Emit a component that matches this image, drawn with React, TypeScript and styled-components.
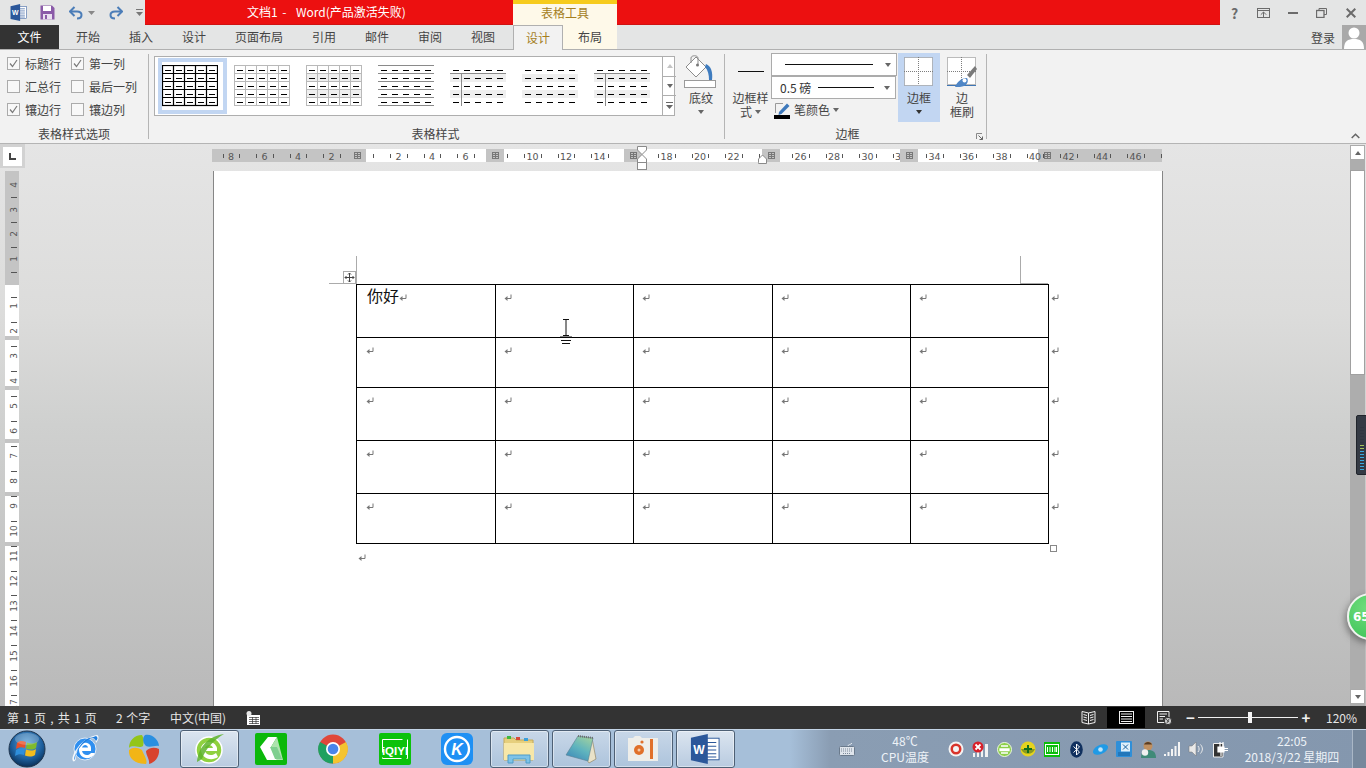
import React from 'react';
import styled, { createGlobalStyle } from 'styled-components';

const GlobalStyle = createGlobalStyle`
  html, body {
    margin: 0;
    padding: 0;
    background: #333;
  }
  * {
    box-sizing: border-box;
  }
`;

const Frame = styled.div`
  position: relative;
  display: flex;
  flex-direction: column;
  width: 1366px;
  height: 768px;
  overflow: hidden;
  font-family: "Noto Sans CJK SC", "Noto Sans", sans-serif;
  font-size: 12px;
  color: #444;
`;

/* ---------- title bar ---------- */
const TitleBar = styled.div`
  display: flex;
  height: 25px;
  flex: none;
  background: #e4e5e5;
`;
const Qat = styled.div`
  display: flex;
  align-items: center;
  width: 145px;
  flex: none;
  padding-left: 10px;
`;
const QatIcon = styled.svg<{ $gap?: number }>`
  display: block;
  flex: none;
  margin-left: ${({ $gap }) => $gap ?? 0}px;
`;
const RedBand = styled.div`
  display: flex;
  flex: 1;
  height: 25px;
  background: #ec1010;
  box-shadow: inset 0 -1px 0 #cf1212;
`;
const DocTitle = styled.div`
  width: 368px;
  padding-left: 102px;
  line-height: 23px;
  color: #fff;
  white-space: pre;
  word-spacing: 2px;
`;
const ContextHeader = styled.div`
  width: 104px;
  height: 25px;
  border-top: 4px solid #f6cb1d;
  background: #fef9e9;
  color: #a57f1f;
  line-height: 17px;
  text-align: center;
`;
const WindowControls = styled.div`
  display: flex;
  align-items: center;
  width: 146px;
  flex: none;
`;
const ControlSlot = styled.div`
  display: flex;
  justify-content: center;
  align-items: center;
  width: 29px;
  height: 24px;
  color: #6b6b6b;
  font-size: 14px;
  font-weight: 700;
`;

/* ---------- tabs ---------- */
const TabStrip = styled.div`
  display: flex;
  height: 25px;
  flex: none;
  background: #e4e5e5;
  border-bottom: 1px solid #b0b0b0;
`;
const FileTab = styled.div`
  width: 59px;
  margin-right: 2.5px;
  background: #333;
  color: #fff;
  line-height: 23px;
  text-align: center;
`;
const Tab = styled.div`
  padding: 0 14.5px;
  line-height: 23px;
  color: #444;
`;
const ContextTab = styled.div<{ $active?: boolean }>`
  position: relative;
  z-index: 1;
  width: ${({ $active }) => ($active ? 50 : 54)}px;
  height: ${({ $active }) => ($active ? 25 : 24)}px;
  margin-left: ${({ $active }) => ($active ? 3.5 : 0)}px;
  line-height: 23px;
  text-align: center;
  background: ${({ $active }) => ($active ? '#f2f2f2' : '#fef9e9')};
  color: ${({ $active }) => ($active ? '#a57f1f' : '#444')};
  border: ${({ $active }) => ($active ? '1px solid #b0b0b0' : 'none')};
  border-bottom: none;
`;
const SignIn = styled.div`
  display: flex;
  align-items: flex-end;
  gap: 7px;
  margin-left: auto;
  height: 24px;
  line-height: 23px;
`;
const SignInLabel = styled.span`
  align-self: center;
`;

/* ---------- ribbon ---------- */
const Ribbon = styled.div`
  display: flex;
  height: 94px;
  flex: none;
  background: #f2f2f2;
  border-bottom: 1px solid #b4b4b4;
`;
const Group = styled.div<{ $width: number }>`
  position: relative;
  display: flex;
  flex-direction: column;
  width: ${({ $width }) => $width}px;
  flex: none;
  height: 93px;
  &::after {
    content: '';
    position: absolute;
    right: 0;
    top: 4px;
    bottom: 4px;
    width: 1px;
    background: #b5b5b5;
  }
`;
const GroupBody = styled.div`
  display: flex;
  align-items: flex-start;
  height: 75px;
  padding-left: 5px;
`;
const GroupLabel = styled.div<{ $inset?: number }>`
  height: 17px;
  line-height: 17px;
  text-align: center;
  padding-right: ${({ $inset }) => $inset ?? 1}px;
`;
const OptionGrid = styled.div`
  display: grid;
  grid-template-columns: 64px 80px;
  grid-auto-rows: 23px;
  padding: 2px 0 0 2px;
`;
const Option = styled.div`
  display: flex;
  align-items: center;
  gap: 5px;
  white-space: nowrap;
`;
const CheckBox = styled.span`
  display: flex;
  justify-content: center;
  align-items: center;
  width: 13px;
  height: 13px;
  flex: none;
  border: 1px solid #ababab;
  background: #f8f8f8;
`;
const Gallery = styled.div`
  display: flex;
  width: 521px;
  height: 60px;
  margin-top: 6px;
  border: 1px solid #aeaeae;
  background: #fff;
`;
const GalleryItems = styled.div`
  display: flex;
  flex: 1;
  padding: 1px 0 0 3px;
`;
const GalleryItem = styled.div<{ $selected?: boolean }>`
  display: flex;
  align-items: center;
  width: 72px;
  height: 56px;
  padding-left: 4px;
  ${({ $selected }) =>
    $selected
      ? `width: 69px; margin-right: 3px; padding-left: 0; border: 4px solid #c2d6f2;`
      : ''}
`;
const GalleryArrows = styled.div`
  display: flex;
  flex-direction: column;
  width: 14px;
  flex: none;
  border-left: 1px solid #aeaeae;
`;
const GalleryArrow = styled.div`
  display: flex;
  flex: 1;
  justify-content: center;
  align-items: center;
  border-bottom: 1px solid #aeaeae;
  &:last-child {
    border-bottom: none;
  }
`;
const LargeButton = styled.div<{ $width: number; $active?: boolean; $left?: number }>`
  display: flex;
  flex-direction: column;
  align-items: center;
  width: ${({ $width }) => $width}px;
  height: 69px;
  flex: none;
  margin: 3px 0 0 ${({ $left }) => $left ?? 0}px;
  background: ${({ $active }) => ($active ? '#c2d6f2' : 'transparent')};
`;
const LargeIcon = styled.div<{ $top?: number }>`
  display: flex;
  justify-content: center;
  align-items: flex-start;
  height: 38px;
  flex: none;
  width: 100%;
  padding-top: ${({ $top }) => $top ?? 0}px;
`;
const LargeLabel = styled.div`
  display: flex;
  justify-content: center;
  align-items: center;
  gap: 3px;
  height: 14px;
  line-height: 14px;
  white-space: nowrap;
`;
const Caret = styled.span<{ $color?: string }>`
  display: inline-block;
  width: 0;
  height: 0;
  flex: none;
  border-left: 3.5px solid transparent;
  border-right: 3.5px solid transparent;
  border-top: 4px solid ${({ $color }) => $color ?? '#666'};
`;
const CaretUp = styled(Caret)`
  border-top: none;
  border-bottom: 4px solid ${({ $color }) => $color ?? '#c4c4c4'};
`;
const BorderStack = styled.div`
  display: flex;
  flex-direction: column;
  width: 127px;
  flex: none;
  margin-top: 3px;
`;
const LineSelect = styled.div<{ $width: number }>`
  display: flex;
  align-items: center;
  width: ${({ $width }) => $width}px;
  height: 23px;
  padding: 0 5px 0 8px;
  background: #fff;
  border: 1px solid #ababab;
  color: #333;
  white-space: nowrap;
`;
const Stroke = styled.span<{ $width: number; $left: number }>`
  display: block;
  width: ${({ $width }) => $width}px;
  height: 1px;
  margin-left: ${({ $left }) => $left}px;
  background: #111;
  flex: none;
`;
const CaretEnd = styled.span`
  display: flex;
  margin-left: auto;
`;
const PenRow = styled.div`
  display: flex;
  align-items: center;
  gap: 3px;
  height: 23px;
  padding: 0 0 2px 3px;
`;
const Launcher = styled.svg`
  position: absolute;
  right: 4px;
  bottom: 3px;
`;
const CollapseArrow = styled.svg`
  margin: auto 6px 4px auto;
`;

/* ---------- workspace ---------- */
const Workspace = styled.div`
  display: flex;
  flex: none;
  height: 562px;
  background: linear-gradient(#e5e5e5, #dcdcdb 30%, #cfd0cf 50%, #b9b9b9);
`;
const LeftRail = styled.div`
  display: flex;
  flex-direction: column;
  width: 213px;
  flex: none;
`;
const TabStopBox = styled.div`
  display: flex;
  justify-content: center;
  align-items: center;
  width: 25px;
  height: 24px;
  flex: none;
  padding: 3px 3px 2px 3px;
  background: #d2d2d2;
`;
const TabStopInner = styled.div`
  display: flex;
  justify-content: center;
  align-items: center;
  width: 100%;
  height: 100%;
  background: #fff;
`;
const VerticalRuler = styled.svg`
  display: block;
  margin: 3px 0 0 5px;
`;
const Center = styled.div`
  display: flex;
  flex-direction: column;
  width: 950px;
  flex: none;
`;
const RulerBar = styled.svg`
  display: block;
  flex: none;
  margin: 5px 0 9px -1px;
  overflow: visible;
`;
const Page = styled.div`
  position: relative;
  flex: 1;
  padding: 113px 0 0 142px;
  background: #fff;
  border-left: 1px solid #868686;
  border-right: 1px solid #868686;
`;
const CropMark = styled.div<{ $left: number; $top: number; $width: number; $height: number }>`
  position: absolute;
  left: ${({ $left }) => $left}px;
  top: ${({ $top }) => $top}px;
  width: ${({ $width }) => $width}px;
  height: ${({ $height }) => $height}px;
  background: #ababab;
`;
const MoveHandle = styled.svg`
  position: absolute;
  left: 129px;
  top: 100px;
  background: #fff;
`;
const ResizeHandle = styled.div`
  position: absolute;
  left: 836px;
  top: 374px;
  width: 7px;
  height: 7px;
  background: #fff;
  border: 1px solid #888;
`;
const IBeam = styled.svg`
  position: absolute;
  left: 346px;
  top: 148px;
`;
const DocTable = styled.table`
  table-layout: fixed;
  width: 707px;
  border-collapse: collapse;
`;
const ColumnWidth = styled.col<{ $width: number }>`
  width: ${({ $width }) => $width}px;
`;
const DocRow = styled.tr<{ $height: number }>`
  height: ${({ $height }) => $height}px;
`;
const Cell = styled.td`
  padding: 8px 0 0 9px;
  vertical-align: top;
  border: 1px solid #000;
  line-height: 8px;
`;
const InnerCell = styled(Cell)`
  padding-left: 8px;
`;
const FirstCell = styled(Cell)`
  padding: 0 0 0 10px;
  line-height: 21px;
  font-size: 16px;
  color: #111;
`;
const RowEnd = styled.td`
  padding: 8px 0 0 2px;
  vertical-align: top;
  line-height: 8px;
`;
const Mark = styled.svg`
  display: inline-block;
`;
const AfterTable = styled.div`
  margin: 9px 0 0 2px;
  line-height: 8px;
`;
const Scrollbar = styled.div`
  display: flex;
  flex-direction: column;
  width: 15px;
  margin: 1px 1px 0 auto;
  background: #adadad;
`;
const ScrollButton = styled.div`
  display: flex;
  justify-content: center;
  align-items: center;
  width: 15px;
  height: 15px;
  flex: none;
  background: #fff;
  border: 1px solid #ababab;
`;
const ScrollThumb = styled.div`
  width: 15px;
  height: 205px;
  flex: none;
  margin-top: 10px;
  background: #fff;
  border: 1px solid #a0a0a0;
`;
const ScrollFill = styled.div`
  flex: 1;
`;
const ScrollEnd = styled.div`
  height: 2px;
  flex: none;
`;

/* ---------- floating desktop widgets ---------- */
const MeterWidget = styled.div`
  position: absolute;
  left: 1356px;
  top: 415px;
  width: 12px;
  height: 60px;
  display: flex;
  flex-direction: column;
  justify-content: flex-end;
  gap: 1px;
  padding: 5px 0 3px 3px;
  background: #343a44;
  border: 1px solid #20242b;
  border-radius: 2px;
`;
const MeterTick = styled.span<{ $color: string }>`
  display: block;
  width: 4px;
  height: 1px;
  margin-bottom: 1px;
  background: ${({ $color }) => $color};
`;
const GreenBall = styled.div`
  position: absolute;
  left: 1347px;
  top: 593px;
  width: 47px;
  height: 47px;
  padding-left: 4px;
  line-height: 45px;
  border-radius: 50%;
  border: 2px solid #f0f4f0;
  background: radial-gradient(circle at 40% 30%, #6fdc7c, #38c054);
  box-shadow: -2px 3px 6px rgba(60, 60, 60, 0.5);
  color: #fff;
  font-family: "DejaVu Sans", sans-serif;
  font-size: 12px;
  font-weight: 700;
`;

/* ---------- status bar ---------- */
const StatusBar = styled.div`
  display: flex;
  align-items: center;
  height: 23px;
  flex: none;
  padding-left: 7px;
  background: #333;
  color: #e6e6e6;
  white-space: pre;
`;
const StatusText = styled.span<{ $width: number; $spread?: number }>`
  width: ${({ $width }) => $width}px;
  flex: none;
  word-spacing: ${({ $spread }) => $spread ?? 0}px;
`;
const ViewGroup = styled.div`
  display: flex;
  align-items: center;
  margin-left: auto;
  height: 23px;
`;
const ViewButton = styled.div<{ $active?: boolean }>`
  display: flex;
  justify-content: center;
  align-items: center;
  width: 38px;
  height: 21px;
  background: ${({ $active }) => ($active ? '#000' : 'transparent')};
`;
const ZoomSign = styled.span<{ $width: number }>`
  width: ${({ $width }) => $width}px;
  text-align: center;
  font-size: 15px;
  font-weight: 700;
  line-height: 20px;
  color: #f0f0f0;
`;
const ZoomTrack = styled.div`
  position: relative;
  width: 100px;
  height: 1px;
  background: #f0f0f0;
`;
const ZoomThumb = styled.span`
  position: absolute;
  left: 50px;
  top: -5px;
  width: 4px;
  height: 11px;
  background: #f4f4f4;
`;
const ZoomValue = styled.span`
  width: 52px;
  padding-left: 12px;
`;

/* ---------- taskbar ---------- */
const Taskbar = styled.div`
  display: flex;
  align-items: stretch;
  height: 39px;
  flex: none;
  background: linear-gradient(90deg, #a6bfd9 0, #a6bfd9 790px, #8a9db3 830px, #8497ae 100%);
  border-top: 1px solid #c3d4e6;
  color: #edf2f7;
`;
const OrbSlot = styled.div`
  display: flex;
  justify-content: center;
  align-items: center;
  width: 54px;
  flex: none;
`;
const TaskSlot = styled.div<{ $shift?: number }>`
  display: flex;
  justify-content: center;
  align-items: center;
  width: 62px;
  flex: none;
  padding-right: ${({ $shift }) => $shift ?? 0}px;
`;
const TaskButton = styled.div<{ $hot?: boolean }>`
  display: flex;
  justify-content: center;
  align-items: center;
  width: 59px;
  height: 38px;
  border: 1px solid #4e6075;
  border-radius: 3px;
  background: ${({ $hot }) =>
    $hot
      ? 'linear-gradient(#dbe5f0, #b9cbe0)'
      : 'linear-gradient(#c8d7e8, #adc4dc)'};
  box-shadow: inset 0 0 0 1px rgba(255, 255, 255, 0.45);
`;
const KeyboardSlot = styled.div`
  display: flex;
  justify-content: center;
  align-items: center;
  width: 24px;
  margin-left: 99px;
  flex: none;
`;
const CpuBlock = styled.div`
  display: flex;
  flex-direction: column;
  justify-content: center;
  align-items: center;
  width: 85px;
  flex: none;
  padding-left: 7px;
  line-height: 16px;
`;
const Tray = styled.div`
  display: flex;
  align-items: center;
  flex: none;
`;
const TraySlot = styled.div`
  display: flex;
  justify-content: center;
  align-items: center;
  width: 24px;
  flex: none;
`;
const Clock = styled.div`
  display: flex;
  flex-direction: column;
  justify-content: center;
  align-items: center;
  width: 120px;
  flex: none;
  line-height: 16px;
`;
const ShowDesktop = styled.div`
  flex: 1;
  background: #76889c;
  border-left: 1px solid #a9b7c6;
`;

/* ---------- ribbon glyphs ---------- */
const Check = () => (
  <svg width="11" height="11" viewBox="0 0 11 11">
    <path d="M2 5.5 L4.5 8.5 L9 2" fill="none" stroke="#7a7a7a" strokeWidth="1.2" />
  </svg>
);

type ThumbKind = 'black' | 'gray' | 'banded' | 'rows' | 'column' | 'plain' | 'column2';

const TableThumb = ({ kind }: { kind: ThumbKind }) => {
  const rows = [0, 1, 2, 3, 4];
  const gridColor = kind === 'black' ? '#000' : '#b9b9b9';
  const hasGrid = kind === 'black' || kind === 'gray' || kind === 'banded';
  const hasBands = kind === 'banded' || kind === 'column' || kind === 'plain' || kind === 'column2';
  return (
    <svg width="56" height="42" viewBox="0 0 56 42">
      {hasBands && (
        <>
          <rect x="0" y="9" width="56" height="8" fill="#efefef" />
          <rect x="0" y="25" width="56" height="8" fill="#efefef" />
        </>
      )}
      {rows.map((r) =>
        rows.map((c) => (
          <rect key={`${r}-${c}`} x={3 + c * 11} y={5 + r * 8} width="6" height="1" fill="#000" />
        )),
      )}
      {hasGrid && (
        <g fill="none" stroke={gridColor} strokeWidth={kind === 'black' ? 1.2 : 1}>
          <rect x="0.5" y="0.5" width="55" height="40" />
          {[1, 2, 3, 4].map((i) => (
            <path key={i} d={`M${i * 11 + 0.5} 0 V41 M0 ${i * 8 + 0.5} H56`} />
          ))}
        </g>
      )}
      {kind === 'rows' && (
        <g stroke="#8a8a8a">
          {[0, 1, 2, 3, 4, 5].map((i) => (
            <path key={i} d={`M0 ${i * 8 + 0.5} H56`} />
          ))}
        </g>
      )}
      {(kind === 'column' || kind === 'column2') && (
        <path d="M0 8.5 H56 M11.5 8 V41" stroke="#8a8a8a" fill="none" />
      )}
    </svg>
  );
};

const BucketIcon = () => (
  <svg width="34" height="36" viewBox="0 0 34 36">
    <path d="M2 12 L12 2 L22 12 L12 22 Z" fill="#fff" stroke="#8c8c8c" />
    <path d="M7 8 V3 C7 0 14 0 14 3 V9" fill="none" stroke="#8c8c8c" />
    <circle cx="13.5" cy="10" r="1.5" fill="#777" />
    <path d="M22 9 C27 11 29 17 28 25 L25 25 C25 20 24 15 21 12 Z" fill="#3f7cbf" />
    <rect x="0.5" y="25.5" width="31" height="7" fill="#fff" stroke="#9a9a9a" />
  </svg>
);

const PenIcon = () => (
  <svg width="17" height="18" viewBox="0 0 17 18">
    <path d="M1.5 12 V2.5 H9" fill="none" stroke="#999" />
    <path d="M5 11 L13 2.5 L15.5 5 L7.5 13 L4.5 14 Z" fill="#3d78bb" />
    <rect x="0" y="14" width="16" height="4" fill="#000" />
  </svg>
);

const BorderGrid = ({ brush }: { brush?: boolean }) => (
  <svg width="30" height="31" viewBox="0 0 30 31">
    <rect x="0.5" y="0.5" width="28" height={brush ? 27 : 28} fill="#fff" />
    <g fill="none" stroke="#7d7d7d" strokeDasharray="1 1">
      <rect x="0.5" y="0.5" width="28" height={brush ? 27 : 28} />
      <path d="M14.5 0 V28 M0 14.5 H29" />
    </g>
    {brush && (
      <>
        <path d="M0 28.5 H29" stroke="#3f76b5" />
        <path d="M28 9 L30 12 L23 21 L20 18 Z" fill="#7a7a7a" />
        <path d="M8 30 C10 25 14 21 20 21 C22 24 20 28 17 29 C15 30 11 30 8 30 Z" fill="#4f86c6" />
        <circle cx="17.5" cy="23.5" r="2" fill="#fff" />
      </>
    )}
  </svg>
);

/* ---------- rulers ---------- */
const rulerX = (n: number) => 153 + 16.75 * n;
const labelNumbers = [-8, -6, -4, -2, 2, 4, 6, 10, 12, 14, 18, 20, 22, 26, 28, 30, 32, 34, 36, 38, 40, 42, 44, 46];
const tickNumbers = Array.from({ length: 57 }, (_, i) => i - 9);
const gapCenters = [145, 283, 421, 559, 697, 835];

const HorizontalRuler = () => (
  <RulerBar width="950" height="13" viewBox="0 0 950 13">
    <rect width="950" height="13" fill="#c4c4c4" />
    {[154, 292, 430, 568, 706].map((x) => (
      <rect key={x} x={x} y="0" width="120" height="13" fill="#fff" />
    ))}
    {tickNumbers.map((n) => (
      <rect key={n} x={Math.round(rulerX(n + 0.5))} y="5" width="1" height="4" fill="#555" />
    ))}
    {labelNumbers.map((n) => (
      <text
        key={n}
        x={rulerX(n)}
        y="10.5"
        textAnchor="middle"
        fontFamily='"DejaVu Sans", sans-serif'
        fontSize="9.5"
        fill="#555"
      >
        {Math.abs(n)}
      </text>
    ))}
    {gapCenters.slice(1, 5).map((x) => (
      <rect key={x} x={x - 9} y="0" width="18" height="13" fill="#c4c4c4" />
    ))}
    {gapCenters.map((x) => (
      <path
        key={x}
        d={`M${x - 3} 3.5 H${x + 4} M${x - 3} 5.5 H${x + 4} M${x - 3} 7.5 H${x + 4} M${x - 3} 9.5 H${x + 4} M${x - 2.5} 3 V10 M${x + 0.5} 3 V10 M${x + 3.5} 3 V10`}
        stroke="#777"
        strokeWidth="1"
        fill="none"
      />
    ))}
    <g fill="#fff" stroke="#8a8a8a">
      <path d="M425.5 -2.5 H434.5 V1 L430 5.5 L425.5 1 Z" />
      <path d="M425.5 13.5 V10 L430 5.5 L434.5 10 V13.5 Z" />
      <rect x="425.5" y="13.5" width="9" height="7" />
      <path d="M546.5 13.5 V10 L550.5 6 L554.5 10 V14.5 H546.5 Z" />
    </g>
  </RulerBar>
);

const verticalLabels = [
  { y: 14, n: 4 }, { y: 39, n: 3 }, { y: 63, n: 2 }, { y: 88, n: 1 },
  { y: 135, n: 1 }, { y: 160, n: 2 }, { y: 185, n: 3 }, { y: 210, n: 4 },
  { y: 235, n: 5 }, { y: 260, n: 6 }, { y: 285, n: 7 }, { y: 310, n: 8 },
  { y: 335, n: 9 }, { y: 360, n: 10 }, { y: 385, n: 11 }, { y: 410, n: 12 },
  { y: 435, n: 13 }, { y: 460, n: 14 }, { y: 485, n: 15 }, { y: 510, n: 16 },
  { y: 534, n: 17 },
];

const SideRuler = () => (
  <VerticalRuler width="14" height="535" viewBox="0 0 14 535">
    <rect width="14" height="535" fill="#fff" />
    <rect width="14" height="114" fill="#c4c4c4" />
    {[165, 215, 268, 321, 371].map((y) => (
      <rect key={y} y={y} width="14" height="4" fill="#c4c4c4" />
    ))}
    {Array.from({ length: 21 }, (_, i) => 26 + i * 24.9).map((y) => (
      <rect key={y} x="6" y={Math.round(y)} width="6" height="1" fill="#555" />
    ))}
    {verticalLabels.map(({ y, n }) => (
      <text
        key={`${y}`}
        transform={`translate(11.5 ${y}) rotate(-90)`}
        textAnchor="middle"
        fontFamily='"DejaVu Sans", sans-serif'
        fontSize="9"
        fill="#555"
      >
        {n}
      </text>
    ))}
  </VerticalRuler>
);

const ParaMark = () => (
  <Mark width="8" height="8" viewBox="0 0 8 8">
    <path d="M7 0.5 V4.5 H2.5" fill="none" stroke="#777" />
    <path d="M3.5 2 L0.5 4.5 L3.5 7 Z" fill="#777" />
  </Mark>
);

/* ---------- status icons ---------- */
const ReadIcon = () => (
  <svg width="15" height="14" viewBox="0 0 15 14">
    <path d="M7.5 2 L1 .5 V11.5 L7.5 13 L14 11.5 V.5 Z M7.5 2 V13" fill="none" stroke="#f0f0f0" />
    <path d="M2.5 3.5 L6 4.5 M2.5 6 L6 7 M2.5 8.5 L6 9.5 M12.5 3.5 L9 4.5 M12.5 6 L9 7 M12.5 8.5 L9 9.5" stroke="#f0f0f0" />
  </svg>
);
const PrintIcon = () => (
  <svg width="15" height="13" viewBox="0 0 15 13">
    <rect x="0.5" y="0.5" width="14" height="12" fill="none" stroke="#f0f0f0" />
    <path d="M2 3 H13 M2 5.5 H13 M2 8 H13 M2 10.5 H13" stroke="#f0f0f0" />
  </svg>
);
const WebIcon = () => (
  <svg width="15" height="14" viewBox="0 0 15 14">
    <path d="M8 11.5 H.5 V.5 H12 V6" fill="none" stroke="#f0f0f0" />
    <path d="M2.5 3 H10 M2.5 5.5 H8 M2.5 8 H6" stroke="#f0f0f0" />
    <circle cx="11" cy="10" r="3.7" fill="#c8c8c8" stroke="#333" />
    <path d="M9 8 L12 11 M12 8 L10 12" stroke="#555" />
  </svg>
);
const MacroIcon = () => (
  <svg width="14" height="14" viewBox="0 0 14 14">
    <rect x="1" y="4" width="13" height="10" fill="#fff" />
    <circle cx="3" cy="2.5" r="2.5" fill="#e8e8e8" />
    <path d="M3 6.5 H13 M3 8.5 H13 M3 10.5 H13 M3 12.5 H13 M6.5 6 V13 M10 6 V13" stroke="#333" strokeWidth="0.7" />
  </svg>
);

/* ---------- taskbar icons ---------- */
const StartOrb = () => (
  <svg width="38" height="38" viewBox="0 0 38 38">
    <defs>
      <radialGradient id="orb" cx="50%" cy="35%" r="65%">
        <stop offset="0" stopColor="#5fa4d8" />
        <stop offset="0.65" stopColor="#1d5f9d" />
        <stop offset="1" stopColor="#0a2f57" />
      </radialGradient>
    </defs>
    <circle cx="19" cy="19" r="18" fill="url(#orb)" stroke="#20344c" />
    <path d="M9 13 C12 10 15 11 18 12 L17 18 C14 17 11 17 8 19 Z" fill="#e8502a" />
    <path d="M19 12.5 C22 14 25 14 29 12 L28 18 C25 20 22 20 18 18.5 Z" fill="#7fbb2e" />
    <path d="M8 20 C11 18 14 18 17 19 L16 25 C13 24 10 24 7 26 Z" fill="#2f8fdc" />
    <path d="M18 19.5 C22 21 25 21 28 19 L27 25 C24 27 21 27 17 25.5 Z" fill="#f5bd1e" />
    <ellipse cx="19" cy="9" rx="12" ry="6" fill="#fff" opacity="0.22" />
  </svg>
);
const IeIcon = () => (
  <svg width="32" height="34" viewBox="0 0 32 34">
    <circle cx="16" cy="17" r="11" fill="#2f8ff0" stroke="#dfeaf6" strokeWidth="1" />
    <path d="M10 16 C10 9 22 9 22 16 V19 H13 C14 24 20 24 22 21 H26 C23 29 9 28 10 16 Z M13 15.5 H19 C18.5 12 14 12 13 15.5 Z" fill="#fff" />
    <path d="M4 29 C1 25 11 6 28 3 C31 4 29 9 27 11 C27 7 24 6 21 6 C12 9 6 21 7 27 C6 29 5 30 4 29 Z" fill="#fff" opacity="0.9" />
    <path d="M6 28 C3 25 13 8 27 4 C29 5 29 7 27 9 C26 6 23 5 20 6 C12 9 6 20 6 28 Z" fill="#1e7ee0" />
  </svg>
);
const PinwheelIcon = () => (
  <svg width="32" height="32" viewBox="0 0 32 32">
    <path d="M14 2 C6 2 1 8 1 15 C5 11 11 16 15 13 C16 9 16 5 14 2 Z" fill="#93c51a" />
    <path d="M17 2 C24 0 31 7 31 13 C27 12 22 15 18 13 C15 10 14 5 17 2 Z" fill="#2a8fe0" />
    <path d="M31 16 C32 24 26 30 21 31 C22 27 18 22 18 18 C22 14 27 14 31 16 Z" fill="#d8432e" />
    <path d="M1 17 C0 25 7 31 18 31 C20 28 16 22 14 17 C9 14 5 14 1 17 Z" fill="#f2b516" />
  </svg>
);
const GreenEIcon = () => (
  <svg width="30" height="32" viewBox="0 0 30 32">
    <circle cx="15" cy="17" r="13" fill="#8fd13f" stroke="#fff" strokeWidth="1.5" />
    <path d="M7 15 C9 7 21 7 23 15 V18 H11 C12 23 19 23 22 20 L24 24 C17 29 6 25 7 15 Z M11 15 H19 C18 11 12 11 11 15 Z" fill="#fff" />
    <path d="M3 29 C4 15 14 3 30 1 C20 7 12 15 8 26 Z" fill="#5db32b" opacity="0.85" />
  </svg>
);
const GreenAppIcon = () => (
  <svg width="32" height="32" viewBox="0 0 32 32">
    <rect width="32" height="32" rx="2" fill="#0bb80b" />
    <path d="M13 4 H22 L16 14 L22 27 H12 L5 14 Z" fill="#fff" />
    <path d="M16 14 L22 4 L28 27 H22 Z" fill="#bfe8bf" opacity="0.9" />
    <path d="M15 14 H22 L27 26 H20 Z" fill="#7fcf8f" />
  </svg>
);
const ChromeIcon = () => (
  <svg width="30" height="30" viewBox="0 0 30 30">
    <circle cx="15" cy="15" r="14.5" fill="#e0473a" />
    <path d="M15 15 L28 8 A14.5 14.5 0 0 1 15 29.5 Z" fill="#f4c430" />
    <path d="M15 15 L15 29.5 A14.5 14.5 0 0 1 2 8 Z" fill="#1fa160" />
    <circle cx="15" cy="15" r="7" fill="#fff" />
    <circle cx="15" cy="15" r="5.3" fill="#4a85ea" />
  </svg>
);
const IqiyiIcon = () => (
  <svg width="32" height="32" viewBox="0 0 32 32">
    <rect width="32" height="32" rx="2" fill="#0bc20b" />
    <rect x="3.5" y="6.5" width="25" height="19" fill="none" stroke="#fff" strokeDasharray="20 5" />
    <text x="16" y="22" textAnchor="middle" fontFamily='"Liberation Sans", sans-serif' fontSize="11.5" fontWeight="700" fill="#fff">iQIYI</text>
  </svg>
);
const KugouIcon = () => (
  <svg width="32" height="32" viewBox="0 0 32 32">
    <rect width="32" height="32" rx="6" fill="#1e90f4" />
    <circle cx="16" cy="16" r="12" fill="none" stroke="#fff" strokeWidth="2.4" />
    <text x="16" y="21.5" textAnchor="middle" fontFamily='"Liberation Sans", sans-serif' fontSize="16" fontWeight="700" fontStyle="italic" fill="#fff">K</text>
  </svg>
);
const FolderIcon = () => (
  <svg width="32" height="30" viewBox="0 0 32 30">
    <path d="M1 4 H11 L13 6 H30 V26 H1 Z" fill="#e6cf7d" stroke="#c4a958" />
    <path d="M1 9 H31 V26 H1 Z" fill="#f7e7a8" />
    <rect x="4" y="2" width="4" height="3" fill="#3fb83f" />
    <rect x="13" y="3" width="4" height="3" fill="#d64a3a" />
    <rect x="21" y="4" width="4" height="3" fill="#3aa0dc" />
    <path d="M5 21 H27 V29 H23 V25 H10 V29 H5 Z" fill="#7ec3e8" stroke="#4d9cc9" />
  </svg>
);
const NotepadIcon = () => (
  <svg width="32" height="30" viewBox="0 0 32 30">
    <defs>
      <linearGradient id="padCover" x1="0.8" y1="0" x2="0.2" y2="1">
        <stop offset="0" stopColor="#9fd0a0" />
        <stop offset="0.5" stopColor="#5fb4be" />
        <stop offset="1" stopColor="#3d88b8" />
      </linearGradient>
    </defs>
    <path d="M27 4 L31 25 L24 29 L22 26 Z" fill="#e9e2c8" stroke="#8a7a55" strokeWidth="0.6" />
    <path d="M13 2 L28 4 L23 27 L1 21 Z" fill="url(#padCover)" stroke="#5a7f92" strokeWidth="0.6" />
    <path d="M13 2 L28 4" stroke="#6d6d6d" strokeWidth="2" strokeDasharray="1 1" />
  </svg>
);
const CameraAppIcon = () => (
  <svg width="30" height="26" viewBox="0 0 30 26">
    <path d="M0 2 H5 L7 0 H12 L14 2 H30 V25 H0 Z" fill="#eeeeea" />
    <circle cx="11" cy="14" r="5" fill="#e0702a" />
    <circle cx="11" cy="14" r="1.5" fill="#f6c9a6" />
    <circle cx="14" cy="6" r="1.6" fill="#e0702a" />
    <rect x="22" y="3" width="3" height="20" fill="#e0702a" />
  </svg>
);
const WordDocIcon = ({ size }: { size: number }) => (
  <svg width={size} height={size} viewBox="0 0 32 32">
    <rect x="13" y="4.5" width="18" height="23" fill="#fff" stroke="#2b579a" />
    <path d="M17 9 H28 M17 13 H28 M17 17 H28 M17 21 H28 M17 24.5 H28" stroke="#2b579a" strokeWidth="1.2" />
    <path d="M1 4 L19 0 V32 L1 28 Z" fill="#2b579a" />
    <text x="9.7" y="21" textAnchor="middle" fontFamily='"Liberation Sans", sans-serif' fontSize="13" fontWeight="700" fill="#fff">W</text>
  </svg>
);

/* ---------- tray icons ---------- */
const TrayRing = () => (
  <svg width="16" height="16" viewBox="0 0 16 16">
    <circle cx="8" cy="8" r="7.5" fill="#f4f4f4" />
    <circle cx="8" cy="8" r="5.5" fill="#d9342b" />
    <circle cx="8" cy="8" r="3" fill="#f4f4f4" />
  </svg>
);
const TrayBlocked = () => (
  <svg width="17" height="17" viewBox="0 0 17 17">
    <path d="M1 16 V12 H3 V16 Z M5 16 V10 H7 V16 Z M9 16 V8 H11 V16 Z M13 16 V3 H16 V16 Z" fill="#f2f2f2" />
    <circle cx="6" cy="6" r="5.5" fill="#d8202a" />
    <path d="M3.5 3.5 L8.5 8.5 M8.5 3.5 L3.5 8.5" stroke="#fff" strokeWidth="1.8" />
  </svg>
);
const TrayGreenE = () => (
  <svg width="15" height="15" viewBox="0 0 15 15">
    <circle cx="7.5" cy="7.5" r="7" fill="#8ccf4a" stroke="#eef7e2" />
    <path d="M3 7 H12 V8.5 H3 Z M4 4 H11 M4 11 H11" stroke="#fff" strokeWidth="1.3" />
  </svg>
);
const TrayPlus = () => (
  <svg width="16" height="16" viewBox="0 0 16 16">
    <circle cx="8" cy="8" r="7.5" fill="#e5d31f" />
    <path d="M1 8 A7.5 7.5 0 0 0 15 8 Z" fill="#8a9a22" />
    <path d="M8 4 V12 M4 8 H12" stroke="#0f6d1c" strokeWidth="2" />
  </svg>
);
const TrayIqiyi = () => (
  <svg width="16" height="15" viewBox="0 0 16 15">
    <rect width="16" height="15" fill="#0bbd0b" />
    <rect x="1.5" y="2.5" width="13" height="10" fill="none" stroke="#fff" />
    <path d="M3.5 5 V10 M6 5 V10 M8.5 5 V10 M11 5 V10 M12.5 5 V10" stroke="#fff" />
  </svg>
);
const TrayBluetooth = () => (
  <svg width="13" height="17" viewBox="0 0 13 17">
    <ellipse cx="6.5" cy="8.5" rx="6.3" ry="8.3" fill="#11315f" />
    <path d="M3.5 5.5 L9.5 11 L6.5 14 V3 L9.5 6 L3.5 11.5" fill="none" stroke="#fff" />
  </svg>
);
const TraySwirl = () => (
  <svg width="17" height="13" viewBox="0 0 17 13">
    <ellipse cx="8.5" cy="6.5" rx="8" ry="4.5" transform="rotate(-25 8.5 6.5)" fill="#1f9ae6" />
    <circle cx="8.5" cy="6.5" r="2.3" fill="#bfe6fb" />
  </svg>
);
const TrayBox = () => (
  <svg width="16" height="16" viewBox="0 0 16 16">
    <rect width="16" height="16" rx="1" fill="#2f8fd8" />
    <rect x="5" y="1.5" width="9" height="9" fill="#dff0fa" />
    <path d="M7 3.5 L12 8.5 M12 3.5 L7 8.5 M2 12 H14 M2 14 H14" stroke="#175f9c" />
  </svg>
);
const TrayPerson = () => (
  <svg width="17" height="17" viewBox="0 0 17 17">
    <circle cx="8" cy="5" r="4.5" fill="#c09060" />
    <path d="M4 3.5 C5 0 11 0 12 3.5 Z" fill="#5a3d22" />
    <path d="M1 17 C1 11 4 9 8 9 C13 9 16 11 16 17 Z" fill="#3f8a78" />
    <circle cx="5" cy="11.5" r="3.2" fill="#f0f0f0" />
  </svg>
);
const TraySignal = () => (
  <svg width="16" height="14" viewBox="0 0 16 14">
    <path d="M0 12 H2 V14 H0 Z M3.5 10 H5.5 V14 H3.5 Z M7 7 H9 V14 H7 Z M10.5 4 H12.5 V14 H10.5 Z M14 0 H16 V14 H14 Z" fill="#f4f4f4" />
  </svg>
);
const TraySpeaker = () => (
  <svg width="16" height="16" viewBox="0 0 16 16">
    <path d="M1 5 H4 L8 1 V15 L4 11 H1 Z" fill="#e8e8e8" stroke="#777" strokeWidth="0.5" />
    <path d="M10 5 C11.5 7 11.5 9 10 11 M12.5 3.5 C15 6.5 15 9.5 12.5 12.5" fill="none" stroke="#eee" />
  </svg>
);
const TrayPlug = () => (
  <svg width="15" height="17" viewBox="0 0 15 17">
    <path d="M.5 2.5 H10 V16 H.5 Z" fill="#333" stroke="#f0f0f0" />
    <path d="M5 6 H11 V11 H5 Z M11 7.5 H15 M11 9.5 H15 M7 1 V6 M10 1 V6 M8 11 V15" stroke="#fff" fill="#fff" strokeWidth="1.2" />
  </svg>
);

const ribbonTabs = ['开始', '插入', '设计', '页面布局', '引用', '邮件', '审阅', '视图'];
const styleOptions = [
  { label: '标题行', on: true },
  { label: '第一列', on: true },
  { label: '汇总行', on: false },
  { label: '最后一列', on: false },
  { label: '镶边行', on: true },
  { label: '镶边列', on: false },
];
const thumbs: ThumbKind[] = ['black', 'gray', 'banded', 'rows', 'column', 'plain', 'column2'];
const columnWidths = [139, 138, 139, 138, 138, 15];
const rowHeights = [53, 50, 53, 53, 50];
const meterColors = ['#2f3540', '#2f3540', '#2f3540', '#2f3540', '#2f3540', '#2f3540', '#a5c25a', '#a5c25a', '#38a8e0', '#38a8e0', '#38a8e0', '#38a8e0', '#38a8e0', '#38a8e0', '#38a8e0'];
const trayIcons = [TrayRing, TrayBlocked, TrayGreenE, TrayPlus, TrayIqiyi, TrayBluetooth, TraySwirl, TrayBox, TrayPerson, TraySignal, TraySpeaker, TrayPlug];

export default function App() {
  return (
    <Frame>
      <GlobalStyle />
      <TitleBar>
        <Qat>
          <WordDocIcon size={17} />
          <QatIcon $gap={13} width="15" height="15" viewBox="0 0 15 15">
            <path d="M.5 .5 H12 L14.5 3 V14.5 H.5 Z" fill="#8a5aa8" />
            <rect x="3" y="1" width="8" height="5" fill="#fff" />
            <rect x="3" y="9" width="9" height="5.5" fill="#e9dff0" />
            <rect x="5" y="10" width="2" height="4" fill="#8a5aa8" />
          </QatIcon>
          <QatIcon $gap={14} width="15" height="14" viewBox="0 0 15 14">
            <path d="M1.5 5.5 H8 C14 5.5 14 12.5 8 12.5" fill="none" stroke="#4b7db8" strokeWidth="2" />
            <path d="M5.5 1 L1 5.5 L5.5 10" fill="none" stroke="#4b7db8" strokeWidth="2" />
          </QatIcon>
          <QatIcon $gap={4} width="7" height="4" viewBox="0 0 7 4">
            <path d="M0 0 H7 L3.5 4 Z" fill="#888" />
          </QatIcon>
          <QatIcon $gap={13} width="15" height="14" viewBox="0 0 15 14">
            <path d="M13.5 5.5 H7 C1 5.5 1 12.5 7 12.5" fill="none" stroke="#4b7db8" strokeWidth="2" />
            <path d="M9.5 1 L14 5.5 L9.5 10" fill="none" stroke="#4b7db8" strokeWidth="2" />
          </QatIcon>
          <QatIcon $gap={13} width="7" height="7" viewBox="0 0 7 7">
            <path d="M0 .5 H7" stroke="#777" />
            <path d="M0 3 H7 L3.5 7 Z" fill="#777" />
          </QatIcon>
        </Qat>
        <RedBand>
          <DocTitle>文档1 -  Word(产品激活失败)</DocTitle>
          <ContextHeader>表格工具</ContextHeader>
        </RedBand>
        <WindowControls>
          <ControlSlot>?</ControlSlot>
          <ControlSlot>
            <svg width="13" height="10" viewBox="0 0 13 10">
              <rect x="0.5" y="0.5" width="12" height="9" fill="none" stroke="#6b6b6b" />
              <path d="M1 2.5 H12" stroke="#6b6b6b" />
              <path d="M6.5 4 L3.8 6.7 M6.5 4 L9.2 6.7 M6.5 4 V9" stroke="#6b6b6b" fill="none" />
            </svg>
          </ControlSlot>
          <ControlSlot>
            <svg width="10" height="2" viewBox="0 0 10 2">
              <rect width="10" height="2" fill="#6b6b6b" />
            </svg>
          </ControlSlot>
          <ControlSlot>
            <svg width="11" height="10" viewBox="0 0 11 10">
              <path d="M3 2.5 V.5 H10.5 V6.5 H8" fill="none" stroke="#6b6b6b" />
              <rect x="0.5" y="2.5" width="7.5" height="7" fill="none" stroke="#6b6b6b" strokeWidth="1.3" />
            </svg>
          </ControlSlot>
          <ControlSlot>
            <svg width="10" height="10" viewBox="0 0 10 10">
              <path d="M.7 .7 L9.3 9.3 M9.3 .7 L.7 9.3" stroke="#6b6b6b" strokeWidth="2" />
            </svg>
          </ControlSlot>
        </WindowControls>
      </TitleBar>

      <TabStrip>
        <FileTab>文件</FileTab>
        {ribbonTabs.map((t) => (
          <Tab key={t}>{t}</Tab>
        ))}
        <ContextTab $active>设计</ContextTab>
        <ContextTab>布局</ContextTab>
        <SignIn>
          <SignInLabel>登录</SignInLabel>
          <svg width="24" height="24" viewBox="0 0 24 24">
            <rect width="24" height="24" fill="#a9a9a9" />
            <circle cx="12" cy="8" r="5.5" fill="#fff" />
            <path d="M2 24 C2 16 6 14 12 14 C18 14 22 16 22 24 Z" fill="#fff" />
          </svg>
        </SignIn>
      </TabStrip>

      <Ribbon>
        <Group $width={149}>
          <GroupBody>
            <OptionGrid>
              {styleOptions.map((o) => (
                <Option key={o.label}>
                  <CheckBox>{o.on && <Check />}</CheckBox>
                  {o.label}
                </Option>
              ))}
            </OptionGrid>
          </GroupBody>
          <GroupLabel>表格样式选项</GroupLabel>
        </Group>
        <Group $width={576}>
          <GroupBody>
            <Gallery>
              <GalleryItems>
                {thumbs.map((k, i) => (
                  <GalleryItem key={k} $selected={i === 0}>
                    <TableThumb kind={k} />
                  </GalleryItem>
                ))}
              </GalleryItems>
              <GalleryArrows>
                <GalleryArrow>
                  <CaretUp />
                </GalleryArrow>
                <GalleryArrow>
                  <Caret />
                </GalleryArrow>
                <GalleryArrow>
                  <svg width="7" height="7" viewBox="0 0 7 7">
                    <path d="M0 .5 H7" stroke="#666" />
                    <path d="M0 3 H7 L3.5 7 Z" fill="#666" />
                  </svg>
                </GalleryArrow>
              </GalleryArrows>
            </Gallery>
            <LargeButton $width={42} $left={5}>
              <LargeIcon $top={2}>
                <BucketIcon />
              </LargeIcon>
              <LargeLabel>底纹</LargeLabel>
              <LargeLabel>
                <Caret />
              </LargeLabel>
            </LargeButton>
          </GroupBody>
          <GroupLabel $inset={3}>表格样式</GroupLabel>
        </Group>
        <Group $width={262}>
          <GroupBody>
            <LargeButton $width={41}>
              <LargeIcon>
                <svg width="26" height="38" viewBox="0 0 26 38">
                  <path d="M0 18.5 H26" stroke="#111" />
                </svg>
              </LargeIcon>
              <LargeLabel>边框样</LargeLabel>
              <LargeLabel>
                式 <Caret />
              </LargeLabel>
            </LargeButton>
            <BorderStack>
              <LineSelect $width={126}>
                <Stroke $width={88} $left={5} />
                <CaretEnd>
                  <Caret />
                </CaretEnd>
              </LineSelect>
              <LineSelect $width={125}>
                0.5 磅
                <Stroke $width={56} $left={7} />
                <CaretEnd>
                  <Caret />
                </CaretEnd>
              </LineSelect>
              <PenRow>
                <PenIcon />
                笔颜色
                <Caret />
              </PenRow>
            </BorderStack>
            <LargeButton $width={42} $active>
              <LargeIcon $top={4}>
                <BorderGrid />
              </LargeIcon>
              <LargeLabel>边框</LargeLabel>
              <LargeLabel>
                <Caret $color="#333" />
              </LargeLabel>
            </LargeButton>
            <LargeButton $width={40} $left={2}>
              <LargeIcon $top={4}>
                <BorderGrid brush />
              </LargeIcon>
              <LargeLabel>边</LargeLabel>
              <LargeLabel>框刷</LargeLabel>
            </LargeButton>
          </GroupBody>
          <GroupLabel $inset={17}>边框</GroupLabel>
          <Launcher width="7" height="7" viewBox="0 0 7 7">
            <path d="M.5 6 V.5 H6" fill="none" stroke="#888" />
            <path d="M2.5 2.5 L6.5 6.5 M6.5 3.5 V6.5 H3.5" fill="none" stroke="#666" />
          </Launcher>
        </Group>
        <CollapseArrow width="9" height="6" viewBox="0 0 9 6">
          <path d="M.7 5 L4.5 1.2 L8.3 5" fill="none" stroke="#666" strokeWidth="1.5" />
        </CollapseArrow>
      </Ribbon>

      <Workspace>
        <LeftRail>
          <TabStopBox>
            <TabStopInner>
              <svg width="7" height="7" viewBox="0 0 7 7">
                <path d="M1 0 V6 H7" fill="none" stroke="#444" strokeWidth="2" />
              </svg>
            </TabStopInner>
          </TabStopBox>
          <SideRuler />
        </LeftRail>
        <Center>
          <HorizontalRuler />
          <Page>
            <CropMark $left={142} $top={85} $width={1} $height={28} />
            <CropMark $left={115} $top={112} $width={27} $height={1} />
            <CropMark $left={806} $top={85} $width={1} $height={28} />
            <CropMark $left={806} $top={112} $width={28} $height={1} />
            <MoveHandle width="13" height="13" viewBox="0 0 13 13">
              <rect x="0.5" y="0.5" width="12" height="12" fill="#fff" stroke="#aaa" />
              <path d="M6.5 2 V11 M2 6.5 H11 M5 3.5 L6.5 2 L8 3.5 M5 9.5 L6.5 11 L8 9.5 M3.5 5 L2 6.5 L3.5 8 M9.5 5 L11 6.5 L9.5 8" fill="none" stroke="#444" />
            </MoveHandle>
            <DocTable>
              <colgroup>
                {columnWidths.map((w, i) => (
                  <ColumnWidth key={i} $width={w} />
                ))}
              </colgroup>
              <tbody>
                {rowHeights.map((h, r) => (
                  <DocRow key={r} $height={h}>
                    {r === 0 ? (
                      <FirstCell>
                        你好
                        <ParaMark />
                      </FirstCell>
                    ) : (
                      <Cell>
                        <ParaMark />
                      </Cell>
                    )}
                    {[1, 2, 3, 4].map((c) => (
                      <InnerCell key={c}>
                        <ParaMark />
                      </InnerCell>
                    ))}
                    <RowEnd>
                      <ParaMark />
                    </RowEnd>
                  </DocRow>
                ))}
              </tbody>
            </DocTable>
            <AfterTable>
              <ParaMark />
            </AfterTable>
            <ResizeHandle />
            <IBeam width="12" height="27" viewBox="0 0 12 27">
              <path d="M3 .5 H9 M3 16.5 H9 M6 .5 V16.5" stroke="#111" fill="none" />
              <path d="M0 18 H12 M1 21.5 H11 M2 24.5 H10" stroke="#111" fill="none" />
            </IBeam>
          </Page>
        </Center>
        <Scrollbar>
          <ScrollButton>
            <CaretUp $color="#666" />
          </ScrollButton>
          <ScrollThumb />
          <ScrollFill />
          <ScrollButton>
            <Caret />
          </ScrollButton>
          <ScrollEnd />
        </Scrollbar>
      </Workspace>

      <StatusBar>
        <StatusText $width={109} $spread={1.5}>第 1 页 , 共 1 页</StatusText>
        <StatusText $width={54} $spread={1}>2 个字</StatusText>
        <StatusText $width={76}>中文(中国)</StatusText>
        <MacroIcon />
        <ViewGroup>
          <ViewButton>
            <ReadIcon />
          </ViewButton>
          <ViewButton $active>
            <PrintIcon />
          </ViewButton>
          <ViewButton>
            <WebIcon />
          </ViewButton>
          <ZoomSign $width={15}>−</ZoomSign>
          <ZoomTrack>
            <ZoomThumb />
          </ZoomTrack>
          <ZoomSign $width={16}>+</ZoomSign>
          <ZoomValue>120%</ZoomValue>
        </ViewGroup>
      </StatusBar>

      <Taskbar>
        <OrbSlot>
          <StartOrb />
        </OrbSlot>
        <TaskSlot>
          <IeIcon />
        </TaskSlot>
        <TaskSlot $shift={6}>
          <PinwheelIcon />
        </TaskSlot>
        <TaskSlot>
          <TaskButton $hot>
            <GreenEIcon />
          </TaskButton>
        </TaskSlot>
        <TaskSlot>
          <GreenAppIcon />
        </TaskSlot>
        <TaskSlot>
          <ChromeIcon />
        </TaskSlot>
        <TaskSlot>
          <IqiyiIcon />
        </TaskSlot>
        <TaskSlot>
          <KugouIcon />
        </TaskSlot>
        <TaskSlot>
          <TaskButton>
            <FolderIcon />
          </TaskButton>
        </TaskSlot>
        <TaskSlot>
          <TaskButton>
            <NotepadIcon />
          </TaskButton>
        </TaskSlot>
        <TaskSlot>
          <TaskButton>
            <CameraAppIcon />
          </TaskButton>
        </TaskSlot>
        <TaskSlot>
          <TaskButton $hot>
            <WordDocIcon size={30} />
          </TaskButton>
        </TaskSlot>
        <KeyboardSlot>
          <svg width="16" height="13" viewBox="0 0 16 13">
            <path d="M9 3 C9 1 12 2 13 0" fill="none" stroke="#dfe5ec" />
            <rect x="0.5" y="3.5" width="15" height="9" rx="1" fill="#dfe5ec" stroke="#6a7a8c" />
            <path d="M2 6 H14 M2 8 H14 M4 10.5 H12" stroke="#7a8899" strokeDasharray="1 1" />
          </svg>
        </KeyboardSlot>
        <CpuBlock>
          <span>48℃</span>
          <span>CPU温度</span>
        </CpuBlock>
        <Tray>
          {trayIcons.map((Icon, i) => (
            <TraySlot key={i}>
              <Icon />
            </TraySlot>
          ))}
        </Tray>
        <Clock>
          <span>22:05</span>
          <span>2018/3/22 星期四</span>
        </Clock>
        <ShowDesktop />
      </Taskbar>

      <MeterWidget>
        {meterColors.map((c, i) => (
          <MeterTick key={i} $color={c} />
        ))}
      </MeterWidget>
      <GreenBall>65</GreenBall>
    </Frame>
  );
}
